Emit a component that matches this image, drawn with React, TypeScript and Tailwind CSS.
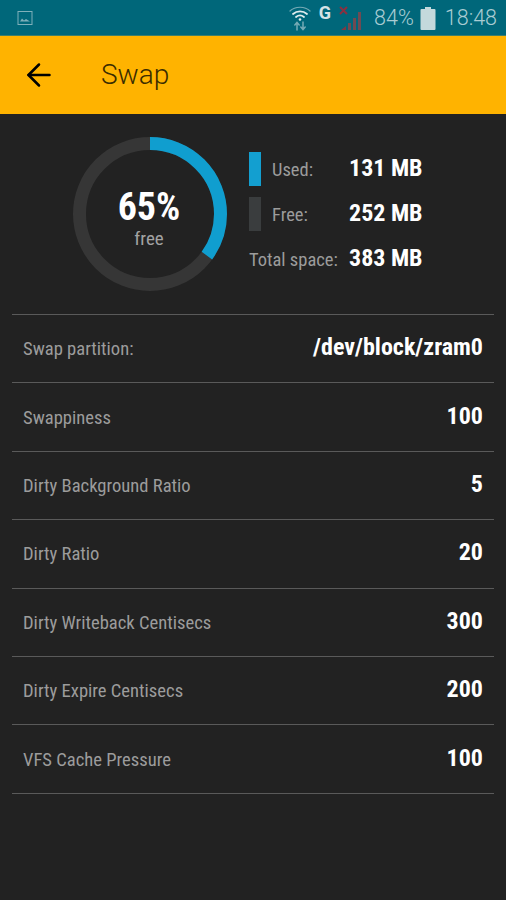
import { ArrowLeft } from "lucide-react";

const rows = [
  { label: "Swap partition:", value: "/dev/block/zram0" },
  { label: "Swappiness", value: "100" },
  { label: "Dirty Background Ratio", value: "5" },
  { label: "Dirty Ratio", value: "20" },
  { label: "Dirty Writeback Centisecs", value: "300" },
  { label: "Dirty Expire Centisecs", value: "200" },
  { label: "VFS Cache Pressure", value: "100" },
];

function StatusBar() {
  return (
    <div className="h-[36px] bg-[#00677a] border-b border-[#3f7f6a] flex items-center pl-[17px] pr-[9px] shrink-0">
      <svg width="16" height="16" viewBox="0 0 16 16" className="opacity-70">
        <rect x="1" y="1.5" width="14" height="13" fill="none" stroke="#b5d0d6" strokeWidth="1" />
        <path d="M3 11.5 L5 8.5 L7 10.5 L9 9 L13 11.5 Z" fill="#b5d0d6" />
      </svg>
      <div className="ml-auto flex items-center">
        <svg width="24" height="26" viewBox="0 0 24 26" fill="none" stroke="#a8c8ce" strokeLinecap="round">
          <path d="M2 6 C7 1 17 1 22 6" strokeWidth="1.2" opacity="0.7" />
          <path d="M5 9 C9 5.5 15 5.5 19 9" strokeWidth="1.8" stroke="#dfecee" />
          <path d="M8 12 C10.5 10 13.5 10 16 12" strokeWidth="1.8" stroke="#dfecee" />
          <circle cx="12" cy="14.5" r="1.3" fill="#dfecee" stroke="none" />
          <path d="M9 18 V25 M6.8 20 L9 17.5 L11.2 20" strokeWidth="1.5" opacity="0.7" />
          <path d="M15 17 V24 M12.8 22 L15 24.5 L17.2 22" strokeWidth="1.5" opacity="0.7" />
        </svg>
        <span className="ml-[7px] -mt-[10px] text-[18px] font-bold text-[#d5e3e6]">G</span>
        <svg width="26" height="26" viewBox="0 0 26 26" className="ml-[7px]">
          <path d="M2 2 L9 9 M9 2 L2 9" stroke="#8a3040" strokeWidth="2" />
          <path d="M3 25 L8 21 V25 Z" fill="#7c3a44" />
          <path d="M10 18 H13 V25 H10 Z M15 13 H18 V25 H15 Z M20 7 H23 V25 H20 Z" fill="#6f4a52" />
        </svg>
        <span className="ml-[10px] mt-[2px] text-[21.5px] text-[#a9ccd3] font-light">84%</span>
        <svg width="16" height="23" viewBox="0 0 16 23" className="ml-[6px] mt-[2px]">
          <rect x="5" y="0" width="6" height="2" fill="#c4d9dc" />
          <rect x="0.5" y="2" width="15" height="21" rx="1" fill="#c4d9dc" />
        </svg>
        <span className="ml-[9px] mt-[2px] text-[21.5px] text-[#a9ccd3] font-light">18:48</span>
      </div>
    </div>
  );
}

function Ring() {
  const r = 70.5;
  const c = 2 * Math.PI * r;
  return (
    <div className="relative w-[154px] h-[154px] shrink-0">
      <svg width="154" height="154" viewBox="0 0 154 154" className="-rotate-90">
        <circle cx="77" cy="77" r={r} fill="none" stroke="#363636" strokeWidth="13" />
        <circle cx="77" cy="77" r={r} fill="none" stroke="#109ecf" strokeWidth="13" strokeDasharray={`${c * 0.35} ${c}`} />
      </svg>
      <div className="absolute inset-0 flex flex-col items-center justify-center pt-[10px] pr-[2px]">
        <span className="text-[38px] leading-[40px] font-bold text-white [font-stretch:condensed]">65%</span>
        <span className="text-[19px] leading-[24px] text-[#a3a3a3] [font-stretch:condensed]">free</span>
      </div>
    </div>
  );
}

function Legend({ color, label, value }: { color: string; label: string; value: string }) {
  return (
    <div className="flex items-center h-[34px]">
      <div className={`w-[12px] h-[34px] ${color}`} />
      <span className="ml-[11px] w-[77px] pt-[3px] text-[18.5px] text-[#9c9c9c] [font-stretch:condensed]">{label}</span>
      <span className="w-[73px] pb-[3px] text-right whitespace-nowrap text-[24px] font-bold text-white [font-stretch:condensed]">{value}</span>
    </div>
  );
}

export default function App() {
  return (
    <div className="w-[506px] h-[900px] bg-[#222222] flex flex-col overflow-hidden font-['Roboto',sans-serif]">
      <StatusBar />
      <div className="h-[78px] bg-[#ffb300] flex items-center pl-[21px] shrink-0">
        <ArrowLeft size={36} strokeWidth={1.7} className="text-black" />
        <span className="ml-[44px] text-[28px] font-light text-[#3a2c00]">Swap</span>
      </div>
      <div className="h-[200px] flex items-center pl-[73px] gap-[22px] shrink-0">
        <Ring />
        <div className="flex flex-col gap-[11px]">
          <Legend color="bg-[#139fd0]" label="Used:" value="131 MB" />
          <Legend color="bg-[#3a3d3e]" label="Free:" value="252 MB" />
          <div className="flex items-center h-[34px]">
            <span className="w-[100px] pt-[3px] whitespace-nowrap text-[18.5px] text-[#9c9c9c] [font-stretch:condensed]">Total space:</span>
            <span className="w-[73px] pb-[3px] text-right whitespace-nowrap text-[24px] font-bold text-white [font-stretch:condensed]">383 MB</span>
          </div>
        </div>
      </div>
      <div className="mx-[12px] border-t border-[#5a5a5a]">
        {rows.map((row) => (
          <div key={row.label} className="h-[68.4px] border-b border-[#5a5a5a] flex items-center justify-between px-[11px]">
            <span className="pt-[3px] text-[18.6px] text-[#9c9c9c] [font-stretch:condensed]">{row.label}</span>
            <span className="pb-[3px] text-[24px] font-bold text-white [font-stretch:condensed]">{row.value}</span>
          </div>
        ))}
      </div>
    </div>
  );
}
